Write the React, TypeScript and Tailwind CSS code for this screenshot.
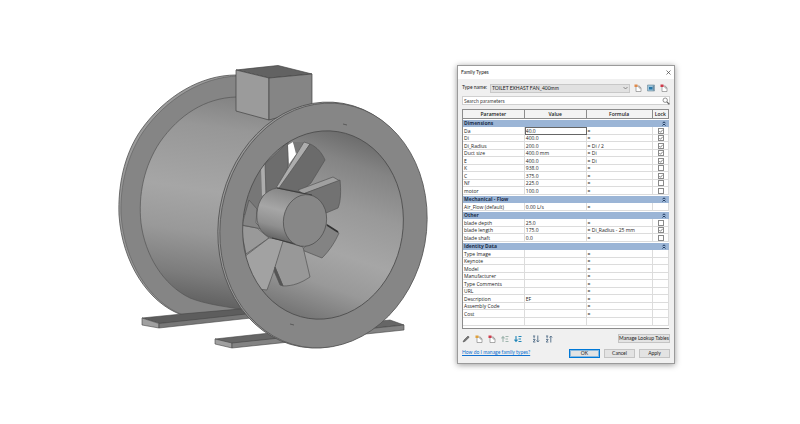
import React, { useState } from 'react';

interface Param {
  name: string;
  value?: string;
  formula?: string;
  lock?: boolean;
}

interface Group {
  title: string;
  rows: Param[];
}

const GROUPS: Group[] = [
  {
    title: 'Dimensions',
    rows: [
      { name: 'Da', value: '40.0', lock: true },
      { name: 'Di', value: '400.0', lock: true },
      { name: 'Di_Radius', value: '200.0', formula: 'Di / 2', lock: true },
      { name: 'Duct size', value: '400.0 mm', formula: 'Di', lock: true },
      { name: 'E', value: '400.0', formula: 'Di', lock: true },
      { name: 'K', value: '938.0', lock: false },
      { name: 'C', value: '375.0', lock: true },
      { name: 'Nf', value: '225.0', lock: false },
      { name: 'motor', value: '100.0', lock: false },
    ],
  },
  { title: 'Mechanical - Flow', rows: [{ name: 'Air_Flow (default)', value: '0.00 L/s' }] },
  {
    title: 'Other',
    rows: [
      { name: 'blade depth', value: '25.0', lock: false },
      { name: 'blade length', value: '175.0', formula: 'Di_Radius - 25 mm', lock: true },
      { name: 'blade shaft', value: '0.0', lock: false },
    ],
  },
  {
    title: 'Identity Data',
    rows: [
      { name: 'Type Image' },
      { name: 'Keynote' },
      { name: 'Model' },
      { name: 'Manufacturer' },
      { name: 'Type Comments' },
      { name: 'URL' },
      { name: 'Description', value: 'EF' },
      { name: 'Assembly Code' },
      { name: 'Cost' },
    ],
  },
];

const CELL = 'border-b border-r border-[#dcdcdc] p-0 pl-px leading-[6px] whitespace-nowrap';
const HEAD = 'border-b border-r border-[#8c8c8c] p-0 font-semibold leading-[8px]';

function FanDrawing() {
  return (
    <svg viewBox="116 65 314 287" className="w-[314px] shrink-0" role="img" aria-label="Duct fan model" strokeLinejoin="round">
      <defs>
        <linearGradient id="duct" x1="215" y1="95" x2="185" y2="305" gradientUnits="userSpaceOnUse">
          <stop offset="0" stopColor="#838383" />
          <stop offset="0.15" stopColor="#979797" />
          <stop offset="0.45" stopColor="#a6a6a6" />
          <stop offset="0.65" stopColor="#999" />
          <stop offset="0.85" stopColor="#7c7c7c" />
          <stop offset="1" stopColor="#5e5e5e" />
        </linearGradient>
        <linearGradient id="bore" x1="350" y1="130" x2="315" y2="320" gradientUnits="userSpaceOnUse">
          <stop offset="0" stopColor="#696969" />
          <stop offset="0.16" stopColor="#848484" />
          <stop offset="0.38" stopColor="#999" />
          <stop offset="0.62" stopColor="#a6a6a6" />
          <stop offset="0.8" stopColor="#999" />
          <stop offset="1" stopColor="#747474" />
        </linearGradient>
        <linearGradient id="hub" x1="282" y1="188" x2="268" y2="241" gradientUnits="userSpaceOnUse">
          <stop offset="0" stopColor="#858585" />
          <stop offset="0.4" stopColor="#a6a6a6" />
          <stop offset="0.7" stopColor="#8f8f8f" />
          <stop offset="1" stopColor="#5a5a5a" />
        </linearGradient>
        <clipPath id="boreClip">
          <ellipse cx="323" cy="225" rx="80" ry="94.5" transform="rotate(9 323 225)" />
        </clipPath>
      </defs>

      {/* rear flange */}
      <path d="M236 75C201 75 165 96 141 130C123 156 118 188 119 215C122 262 148 303 182 315L245 309L262 200Z" fill="#9b9b9b" stroke="#505050" strokeWidth="0.8" />
      <path d="M238 76C202 77 166 99 143 132C127 156 120 186 121 214C124 261 149 302 183 315L246 309L262 200Z" fill="#858585" stroke="#5c5c5c" strokeWidth="0.6" />

      {/* duct shell */}
      <path d="M236 97C205 98 179 115 160 142C144 166 138 195 141 223C145 255 163 285 190 298C205 304 222 306 239 309L290 290L310 110Z" fill="url(#duct)" stroke="#555" strokeWidth="0.7" />

      {/* feet */}
      <path d="M142 318L160 323.5L250 315L240 309L182 314Z" fill="#5d5d5d" stroke="#444" strokeWidth="0.6" />
      <path d="M142 318L159 323.5V328L142 325Z" fill="#a0a0a0" stroke="#444" strokeWidth="0.6" />
      <path d="M159 323.5L246 314L251 318L159 328Z" fill="#777" stroke="#444" strokeWidth="0.6" />
      <path d="M215 339L270 333L390 320L404 325L232 344Z" fill="#666" stroke="#444" strokeWidth="0.6" />
      <path d="M215 339L232 343V348L215 344Z" fill="#a0a0a0" stroke="#444" strokeWidth="0.6" />
      <path d="M232 343L404 325V330L232 348Z" fill="#838383" stroke="#444" strokeWidth="0.6" />

      {/* terminal box */}
      <path d="M236 70L278 65.5L312 74L269 78Z" fill="#626262" stroke="#444" strokeWidth="0.7" />
      <path d="M236 70L269 78V120L236 111Z" fill="#9b9b9b" stroke="#444" strokeWidth="0.7" />
      <path d="M269 78L312 74V108L269 120Z" fill="#858585" stroke="#444" strokeWidth="0.7" />

      {/* front flange */}
      <ellipse cx="321.5" cy="225" rx="103" ry="123.5" transform="rotate(10 321.5 225)" fill="#9a9a9a" stroke="#505050" strokeWidth="0.8" />
      <ellipse cx="323.5" cy="225.5" rx="103" ry="123" transform="rotate(10 323.5 225.5)" fill="#868686" stroke="#555" strokeWidth="0.8" />
      <ellipse cx="323" cy="225" rx="80" ry="94.5" transform="rotate(9 323 225)" fill="url(#bore)" />
      <path d="M343 124L347 125M290 324L294 325" stroke="#555" strokeWidth="0.9" />

      <g clipPath="url(#boreClip)" stroke="#555" strokeWidth="0.7">
        {/* blades */}
        <path d="M240 215L245 190L260 165L264 160L264 196L256 214Z" fill="#777" />
        <path d="M261 168L265 164L265 194L262 196Z" fill="#adadad" stroke="none" />
        <path d="M265 164L288 142V166L282 186L266 194Z" fill="#6d6d6d" />
        <path d="M288 145L293 142L297 153L289 164Z" fill="#fff" stroke="none" />
        <path d="M293 142L304 142L300 148L296 154Z" fill="#777" stroke="none" />
        <path d="M276 188L304 142L310 144L282 188Z" fill="#adadad" />
        <path d="M310 144C317 147 322 153 325 160L311 183L300 192L279 188Z" fill="#6b6b6b" />
        <path d="M298 190L333 177L340 181L303 194Z" fill="#a0a0a0" />
        <path d="M303 194L340 180C341 190 341 201 338 208L326 213Z" fill="#727272" />
        <path d="M326 224L339 233C335 242 330 250 322 258L302 250Z" fill="#838383" />
        <path d="M327 225L338 232" stroke="#333" strokeWidth="1.5" />
        <path d="M240 225L257 228L269 238L246 254Z" fill="#999" />
        <path d="M269 238L285 240L267 290L258 289L244 257Z" fill="#a2a2a2" />
        <path d="M283 241L303 247L310 277C301 283 293 286 283 286L275 267Z" fill="#989898" />
        <path d="M275 267L283 286L280 285L274 271Z" fill="#555" />
        <path d="M249 200L257 209L256 223L262 229L242 225Z" fill="#858585" />
      </g>
      <ellipse cx="323" cy="225" rx="80" ry="94.5" transform="rotate(9 323 225)" fill="none" stroke="#4a4a4a" strokeWidth="0.8" />

      {/* motor */}
      <path d="M277 188L310 195L302 246L269 237C260 232 256 224 257 213C258 200 265 190 277 188Z" fill="url(#hub)" stroke="#505050" strokeWidth="0.7" />
      <path d="M277 188L312 195M272 238L303 246" stroke="#3c3c3c" strokeWidth="1" />
      <ellipse cx="305" cy="220.5" rx="21.5" ry="26" transform="rotate(10 305 220.5)" fill="#878787" stroke="#4c4c4c" strokeWidth="0.7" />
    </svg>
  );
}

function PageIcon({ accent }: { accent: string }) {
  return (
    <svg viewBox="0 0 8 8" className="size-2" aria-hidden="true">
      <path d="M2 2h3.2L7 3.8V7.5H2Z" fill="#fff" stroke="#777" strokeWidth="0.6" />
      <path d="M5 2v2h2" fill="none" stroke="#777" strokeWidth="0.6" />
      <path d="M0.5 0.5h3v2.5h-3Z" fill={accent} />
    </svg>
  );
}

function RenameIcon() {
  return (
    <svg viewBox="0 0 8 8" className="size-2" aria-hidden="true">
      <path d="M0.5 1h7v6h-7Z" fill="#9cc5dc" stroke="#6f8794" strokeWidth="0.6" />
      <path d="M2 3h3.5v2.5H2Z" fill="#2676a8" />
      <path d="M6.3 1.5v5" stroke="#456" strokeWidth="0.6" />
    </svg>
  );
}

function PencilIcon() {
  return (
    <svg viewBox="0 0 8 8" className="size-2" aria-hidden="true">
      <path d="M1 7L2 5L6 1L7.2 2.2L3 6.3Z" fill="#777" stroke="#444" strokeWidth="0.5" />
    </svg>
  );
}

function MoveIcon({ color, down }: { color: string; down?: boolean }) {
  return (
    <svg viewBox="0 0 8 8" className="size-2" fill="none" stroke={color} strokeWidth="1.1" aria-hidden="true">
      <path d="M4.5 1.5h3M4.5 4h2.5M4.5 6.5h3" />
      <path d={down ? 'M2 1v5.5M0.5 4.7L2 6.5L3.5 4.7' : 'M2 7V1.5M0.5 3.3L2 1.5L3.5 3.3'} />
    </svg>
  );
}

function SortIcon({ up }: { up?: boolean }) {
  return (
    <svg viewBox="0 0 8 8" className="size-2" fill="none" stroke="#5f7890" strokeWidth="1" aria-hidden="true">
      <path d={up ? 'M5.8 7.5V1M4.5 2.5L5.8 1L7.1 2.5' : 'M5.8 0.5V7M4.5 5.5L5.8 7L7.1 5.5'} />
      <path d="M1 1h2.2M2.1 1v2.4M1 4.6h2.2L1.2 7h2.2" />
    </svg>
  );
}

function LockBox({ name, checked, onChange }: { name: string; checked: boolean; onChange: (v: boolean) => void }) {
  return (
    <span className="grid place-items-center">
      <input
        type="checkbox"
        aria-label={`Lock ${name}`}
        checked={checked}
        onChange={(e) => onChange(e.target.checked)}
        className="col-start-1 row-start-1 size-[6px] appearance-none border border-[#8a8a8a] bg-white"
      />
      {checked && (
        <svg viewBox="0 0 6 6" className="pointer-events-none col-start-1 row-start-1 size-[6px]" aria-hidden="true">
          <path d="M1.3 3L2.5 4.3L4.8 1.7" fill="none" stroke="#555" strokeWidth="0.7" />
        </svg>
      )}
    </span>
  );
}

function ParamTable() {
  const [locks, setLocks] = useState<Record<string, boolean>>({});

  return (
    <div className="border-b border-l border-t border-[#8c8c8c] bg-white pb-[2px] font-['Open_Sans',sans-serif]">
      <table className="w-full table-fixed border-separate border-spacing-0">
        <colgroup>
          <col className="w-[30%]" />
          <col className="w-[30%]" />
          <col className="w-[32%]" />
          <col className="w-[8%]" />
        </colgroup>
        <thead className="bg-[#f3f3f3]">
          <tr>
            <th className={HEAD}>Parameter</th>
            <th className={HEAD}>Value</th>
            <th className={HEAD}>Formula</th>
            <th className={HEAD}>Lock</th>
          </tr>
        </thead>
        {GROUPS.map((group) => (
          <tbody key={group.title}>
            <tr className="h-[8px]">
              <th colSpan={4} className="border-t border-white bg-[#9bb5d6] p-0 pl-px text-left font-bold leading-[7px] text-[#1c2f4a]">
                <div className="flex items-center justify-between pr-[3px]">
                  {group.title}
                  <svg viewBox="0 0 4 5" className="h-[5px] w-1" fill="none" stroke="#1f3a5f" strokeWidth="1" aria-hidden="true">
                    <path d="M0.5 2.3L2 0.8L3.5 2.3M0.5 4.5L2 3L3.5 4.5" />
                  </svg>
                </div>
              </th>
            </tr>
            {group.rows.map((row) => (
              <tr key={row.name} className="odd:h-[7px] even:h-[8px]">
                <td className={CELL}>{row.name}</td>
                <td className={CELL}>
                  {row.name === 'Da' ? (
                    <input aria-label="Da value" defaultValue={row.value} className="block h-[6px] w-full bg-white leading-[6px] outline outline-[#666]" />
                  ) : (
                    row.value
                  )}
                </td>
                <td className={CELL}>= {row.formula}</td>
                <td className={CELL}>
                  {row.lock !== undefined && (
                    <LockBox
                      name={row.name}
                      checked={locks[row.name] ?? row.lock}
                      onChange={(v) => setLocks({ ...locks, [row.name]: v })}
                    />
                  )}
                </td>
              </tr>
            ))}
          </tbody>
        ))}
        <tbody>
          <tr className="h-[8px]">
            <td className={CELL} />
            <td className={CELL} />
            <td className={CELL} />
            <td className={CELL} />
          </tr>
        </tbody>
      </table>
    </div>
  );
}

const BUTTON = 'h-[9px] border border-[#c4c4c4] bg-[#e3e3e3] text-center leading-[7px] whitespace-nowrap';

function FamilyTypesDialog() {
  return (
    <section
      aria-label="Family Types"
      className="w-[218px] shrink-0 border border-[#9a9a9a] bg-[#f0f0f0] font-[Lato,sans-serif] text-[5px] text-[#222] shadow-[0_1px_6px_rgba(0,0,0,0.4)]"
    >
      <header className="flex h-[13px] items-center justify-between bg-white px-[3px]">
        <h1>Family Types</h1>
        <button aria-label="Close">
          <svg viewBox="0 0 5 5" className="size-[5px]" stroke="#444" strokeWidth="0.7" aria-hidden="true">
            <path d="M0.5 0.5L4.5 4.5M4.5 0.5L0.5 4.5" />
          </svg>
        </button>
      </header>

      <div className="px-1 pt-1">
        <div className="flex h-[10px] items-center">
          <label htmlFor="type-name" className="w-[28px]">Type name:</label>
          <div className="grid flex-1 items-center">
            <select id="type-name" className="col-start-1 row-start-1 h-[9px] w-full appearance-none border border-[#c8c8c8] bg-[#e1e1e1] pl-px leading-[7px]">
              <option>TOILET EXHAST FAN_400mm</option>
            </select>
            <svg viewBox="0 0 5 4" className="pointer-events-none col-start-1 row-start-1 mr-[2px] h-1 w-[5px] justify-self-end" fill="none" stroke="#666" strokeWidth="0.7" aria-hidden="true">
              <path d="M0.5 1L2.5 3L4.5 1" />
            </svg>
          </div>
          <div className="flex gap-[5px] pl-1 pr-[2px]">
            <button aria-label="New type"><PageIcon accent="#e08a4a" /></button>
            <button aria-label="Rename type"><RenameIcon /></button>
            <button aria-label="Delete type"><PageIcon accent="#d03a4a" /></button>
          </div>
        </div>

        <div className="mt-[3px] grid items-center">
          <input
            type="search"
            aria-label="Search parameters"
            placeholder="Search parameters"
            className="col-start-1 row-start-1 h-[9px] w-full border border-[#d0d0d0] bg-white pl-px leading-[7px] placeholder:text-[#444]"
          />
          <svg viewBox="0 0 8 8" className="pointer-events-none col-start-1 row-start-1 size-2 justify-self-end" fill="none" stroke="#666" aria-hidden="true">
            <circle cx="3.2" cy="3.2" r="2.2" strokeWidth="0.7" />
            <path d="M4.9 4.9L7.3 7.3" strokeWidth="1.3" />
          </svg>
        </div>

        <div className="mt-1 pr-px">
          <ParamTable />
        </div>

        <div className="mt-1 flex h-[11px] items-center justify-between">
          <div className="flex gap-[5px]">
            <button aria-label="Edit parameter"><PencilIcon /></button>
            <button aria-label="New parameter"><PageIcon accent="#e0a03a" /></button>
            <button aria-label="Delete parameter"><PageIcon accent="#d03a4a" /></button>
            <button aria-label="Move up"><MoveIcon color="#9fb5ae" /></button>
            <button aria-label="Move down"><MoveIcon color="#1f86b8" down /></button>
            <button aria-label="Sort ascending" className="ml-[5px]"><SortIcon /></button>
            <button aria-label="Sort descending"><SortIcon up /></button>
          </div>
          <button className={`${BUTTON} w-[52px]`}>Manage Lookup Tables</button>
        </div>

        <div className="flex justify-between py-[5px]">
          <a href="#help" className="leading-[6px] text-[#0f70d0] underline">How do I manage family types?</a>
          <div className="flex gap-1">
            <button className="h-[9px] w-[31px] border border-[#0078d7] bg-[#e3e3e3] text-center leading-[7px] ring-1 ring-[#0078d7]/40 ring-inset">OK</button>
            <button className={`${BUTTON} w-[31px]`}>Cancel</button>
            <button className={`${BUTTON} w-[31px]`}>Apply</button>
          </div>
        </div>
      </div>
    </section>
  );
}

export default function App() {
  return (
    <main className="flex min-h-screen items-start bg-white pb-15 pl-29 pt-[65px]">
      <FanDrawing />
      <div className="pl-[27px]">
        <FamilyTypesDialog />
      </div>
    </main>
  );
}
